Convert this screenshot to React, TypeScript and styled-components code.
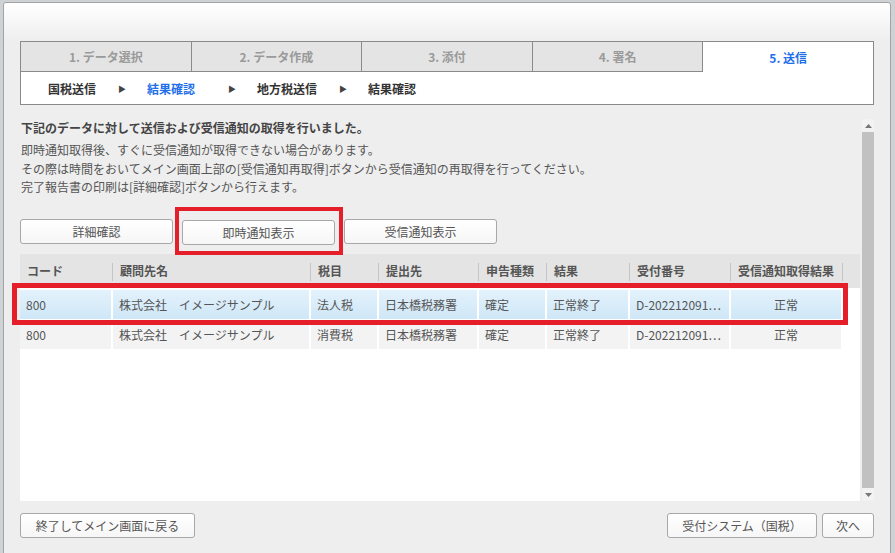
import React from 'react';
import styled, { createGlobalStyle } from 'styled-components';

const FONT = `"Noto Sans CJK JP", "Liberation Sans", sans-serif`;

const GlobalStyle = createGlobalStyle`
  html, body {
    margin: 0;
    padding: 0;
    background: #cfd2d5;
    font-family: ${FONT};
    overflow: hidden;
  }
`;

const Dialog = styled.div`
  box-sizing: border-box;
  margin: 2px 0 0 3px;
  width: 888px;
  height: 560px;
  background: #eeeeee;
  border: 1px solid #a3a3a3;
  border-radius: 3px 3px 0 0;
  display: flex;
  flex-direction: column;
`;

const TitleBar = styled.div`
  height: 38px;
  flex: none;
  background: linear-gradient(#ffffff, #eeeeee);
  border-radius: 3px 3px 0 0;
`;

const Body = styled.div`
  padding: 0 16px;
  display: flex;
  flex-direction: column;
`;

const StepPanel = styled.div`
  box-sizing: border-box;
  height: 64px;
  border: 1px solid #8a8a8a;
  background: #fff;
  display: flex;
  flex-direction: column;
`;

const Tabs = styled.div`
  display: flex;
  height: 30px;
`;

const Tab = styled.div<{ $active?: boolean }>`
  flex: 1;
  box-sizing: border-box;
  display: flex;
  align-items: center;
  justify-content: center;
  font-size: 12px;
  font-weight: bold;
  color: ${p => (p.$active ? '#1f6fea' : '#9a9a9a')};
  background: ${p => (p.$active ? '#fff' : '#e4e4e4')};
  border-bottom: ${p => (p.$active ? 'none' : '1px solid #8a8a8a')};
  & + & {
    border-left: 1px solid #8a8a8a;
  }
`;

const SubSteps = styled.div`
  flex: 1;
  display: flex;
  align-items: center;
  padding-left: 27px;
  font-size: 12px;
  font-weight: bold;
  color: #333;
`;

const SubStep = styled.span<{ $w?: number; $active?: boolean }>`
  display: inline-block;
  width: ${p => (p.$w ? `${p.$w}px` : 'auto')};
  color: ${p => (p.$active ? '#1f6fea' : '#333')};
`;

const Arrow = styled.span`
  display: inline-block;
  width: 29px;
  font-size: 8px;
  color: #444;
`;

const ScrollArea = styled.div`
  margin-top: 14px;
  height: 382px;
  display: flex;
`;

const ScrollContent = styled.div`
  flex: 1;
  display: flex;
  flex-direction: column;
  padding-right: 2px;
`;

const Lead = styled.div`
  font-size: 12px;
  font-weight: bold;
  color: #444;
  line-height: 18px;
  padding-left: 1px;
`;

const Notes = styled.div`
  margin-top: 4px;
  font-size: 12px;
  color: #555;
  line-height: 18.5px;
  padding-left: 1px;
`;

const ButtonRow = styled.div`
  margin-top: 22px;
  display: flex;
  gap: 9px;
`;

const Button = styled.button<{ $w: number }>`
  box-sizing: border-box;
  width: ${p => p.$w}px;
  height: 25px;
  padding: 0;
  border: 1px solid #a8a8a8;
  border-radius: 3px;
  background: linear-gradient(#ffffff, #f6f6f6);
  font-family: ${FONT};
  font-size: 12px;
  color: #555;
  cursor: pointer;
`;

const Marked = styled.div`
  position: relative;
`;

const RedBox = styled.div<{ $t: number; $l: number; $r: number; $b: number; $bw: number }>`
  position: absolute;
  z-index: 5;
  top: ${p => p.$t}px;
  left: ${p => p.$l}px;
  right: ${p => p.$r}px;
  bottom: ${p => p.$b}px;
  border: ${p => p.$bw}px solid #e51f2a;
  pointer-events: none;
`;

const TableBox = styled.div`
  margin-top: 9px;
  flex: 1;
  background: #fff;
  display: flex;
  flex-direction: column;
`;

const COLS = '91px 196px 66px 98px 66px 81px 99px 110px';

const HeadRow = styled.div`
  display: grid;
  grid-template-columns: ${COLS};
  column-gap: 2px;
  height: 34px;
  background: #e4e4e4;
  padding-right: 18px;
`;

const HeadCell = styled.div`
  display: flex;
  align-items: center;
  padding-left: 7px;
  font-size: 12px;
  font-weight: bold;
  color: #555;
  position: relative;
  white-space: nowrap;
  &::after {
    content: '';
    position: absolute;
    right: -2px;
    top: 9px;
    bottom: 7px;
    width: 1px;
    background: #c4c4c4;
  }
`;

const Row = styled.div<{ $selected?: boolean }>`
  position: relative;
  display: grid;
  grid-template-columns: ${COLS};
  column-gap: 2px;
  height: 29px;
  margin-top: ${p => (p.$selected ? '2px' : '1px')};
  width: fit-content;
`;

const Cell = styled.div<{ $selected?: boolean; $center?: boolean }>`
  display: flex;
  align-items: center;
  justify-content: ${p => (p.$center ? 'center' : 'flex-start')};
  padding-left: ${p => (p.$center ? '0' : '6px')};
  font-size: 12px;
  color: #555;
  white-space: nowrap;
  overflow: hidden;
  background: ${p => (p.$selected ? 'linear-gradient(#e3f2fc, #cfe7f7)' : '#f3f3f3')};
`;

const ScrollBar = styled.div`
  width: 12px;
  display: flex;
  flex-direction: column;
`;

const ScrollBtn = styled.div`
  height: 13px;
  background: #f2f2f2;
  display: flex;
  align-items: center;
  justify-content: center;
`;

const Thumb = styled.div`
  flex: 1;
  background: #c1c1c1;
`;

const Footer = styled.div`
  margin-top: 12px;
  display: flex;
  gap: 5px;
`;

const Spacer = styled.div`
  flex: 1;
`;

const Tri = ({ up }: { up?: boolean }) => (
  <svg width="7" height="4" viewBox="0 0 7 4">
    <path d={up ? 'M0 4 L3.5 0 L7 4 Z' : 'M0 0 L3.5 4 L7 0 Z'} fill="#777" />
  </svg>
);

const tabs = ['1. データ選択', '2. データ作成', '3. 添付', '4. 署名', '5. 送信'];

const headers = ['コード', '顧問先名', '税目', '提出先', '申告種類', '結果', '受付番号', '受信通知取得結果'];

const rows = [
  ['800', '株式会社　イメージサンプル', '法人税', '日本橋税務署', '確定', '正常終了', 'D-202212091…', '正常'],
  ['800', '株式会社　イメージサンプル', '消費税', '日本橋税務署', '確定', '正常終了', 'D-202212091…', '正常'],
];

export default function App() {
  return (
    <>
      <GlobalStyle />
      <Dialog>
        <TitleBar />
        <Body>
          <StepPanel>
            <Tabs>
              {tabs.map((t, i) => (
                <Tab key={t} $active={i === tabs.length - 1}>{t}</Tab>
              ))}
            </Tabs>
            <SubSteps>
              <SubStep $w={70}>国税送信</SubStep>
              <Arrow>▶</Arrow>
              <SubStep $w={81} $active>結果確認</SubStep>
              <Arrow>▶</Arrow>
              <SubStep $w={82}>地方税送信</SubStep>
              <Arrow>▶</Arrow>
              <SubStep>結果確認</SubStep>
            </SubSteps>
          </StepPanel>

          <ScrollArea>
            <ScrollContent>
              <Lead>下記のデータに対して送信および受信通知の取得を行いました。</Lead>
              <Notes>
                即時通知取得後、すぐに受信通知が取得できない場合があります。<br />
                その際は時間をおいてメイン画面上部の[受信通知再取得]ボタンから受信通知の再取得を行ってください。<br />
                完了報告書の印刷は[詳細確認]ボタンから行えます。
              </Notes>
              <ButtonRow>
                <Button $w={153}>詳細確認</Button>
                <Marked>
                  <Button $w={153}>即時通知表示</Button>
                  <RedBox $t={-12} $l={-7} $r={-8} $b={-10} $bw={4} />
                </Marked>
                <Button $w={153}>受信通知表示</Button>
              </ButtonRow>
              <TableBox>
                <HeadRow>
                  {headers.map(h => (
                    <HeadCell key={h}>{h}</HeadCell>
                  ))}
                </HeadRow>
                {rows.map((r, ri) => (
                  <Row key={ri} $selected={ri === 0}>
                    {r.map((c, ci) => (
                      <Cell key={ci} $selected={ri === 0} $center={ci === r.length - 1}>{c}</Cell>
                    ))}
                    {ri === 0 && <RedBox $t={-7} $l={-8} $r={-7} $b={-6} $bw={5} />}
                  </Row>
                ))}
              </TableBox>
            </ScrollContent>
            <ScrollBar>
              <ScrollBtn><Tri up /></ScrollBtn>
              <Thumb />
              <ScrollBtn><Tri /></ScrollBtn>
            </ScrollBar>
          </ScrollArea>

          <Footer>
            <Button $w={175}>終了してメイン画面に戻る</Button>
            <Spacer />
            <Button $w={150}>受付システム（国税）</Button>
            <Button $w={52}>次へ</Button>
          </Footer>
        </Body>
      </Dialog>
    </>
  );
}
